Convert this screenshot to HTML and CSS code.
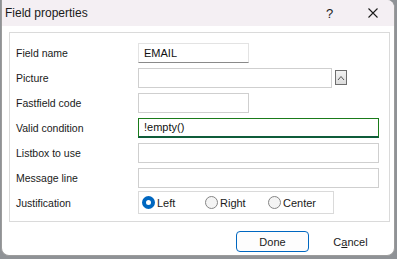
FILE: index.html
```html
<!DOCTYPE html>
<html lang="en">
<head>
    <meta charset="UTF-8">
    <title>Field properties</title>
    <link rel="stylesheet" href="styles.css">
</head>
<body>
    <div class="window">
        <div class="titlebar">
            <span class="title">Field properties</span>
            <span class="help">?</span>
            <span class="close">
                <svg width="10" height="10" viewBox="0 0 10 10">
                    <path d="M0.5 0.5 L9.5 9.5 M9.5 0.5 L0.5 9.5" stroke="#1b1b1b" stroke-width="1.1" fill="none"/>
                </svg>
            </span>
        </div>

        <div class="content">
            <div class="group">
                <div class="row">
                    <label for="fname">Field name</label>
                    <input type="text" id="fname" class="field short active" value="EMAIL">
                </div>

                <div class="row">
                    <label for="picture">Picture</label>
                    <input type="text" id="picture" class="field medium">
                    <button class="picker" type="button">
                        <svg width="8" height="6" viewBox="0 0 8 6">
                            <path d="M1 5 L4 1.5 L7 5" stroke="#555" stroke-width="1" fill="none"/>
                        </svg>
                    </button>
                </div>

                <div class="row">
                    <label for="fastfield">Fastfield code</label>
                    <input type="text" id="fastfield" class="field short">
                </div>

                <div class="row">
                    <label for="valid">Valid condition</label>
                    <input type="text" id="valid" class="field long focused" value="!empty()">
                </div>

                <div class="row">
                    <label for="listbox">Listbox to use</label>
                    <input type="text" id="listbox" class="field long">
                </div>

                <div class="row">
                    <label for="message">Message line</label>
                    <input type="text" id="message" class="field long">
                </div>

                <div class="row">
                    <label>Justification</label>
                    <div class="radios">
                        <span class="radio-item"><span class="radio checked"></span>Left</span>
                        <span class="radio-item"><span class="radio"></span>Right</span>
                        <span class="radio-item"><span class="radio"></span>Center</span>
                    </div>
                </div>
            </div>

            <div class="buttons">
                <button type="button" class="btn done">Done</button>
                <button type="button" class="btn cancel">C<u>a</u>ncel</button>
            </div>
        </div>
    </div>
</body>
</html>
```

FILE: styles.css
```css
body {
    margin: 0;
    height: 259px;
    background-color: #8f9296;
    font-family: 'Liberation Sans', Arial, sans-serif;
    color: #1a1a1a;
    overflow: hidden;
}
.window {
    margin-left: 1px;
    width: 392px;
    height: 255px;
    background-color: #fff;
    border: 1px solid #9c9c9c;
    border-top: none;
    border-radius: 0 8px 8px 8px;
    overflow: hidden;
}
.titlebar {
    height: 26px;
    display: flex;
    align-items: center;
    background-color: #f4eff3;
}
.title {
    padding-left: 3px;
    font-family: 'Segoe UI', 'Liberation Sans', Arial, sans-serif;
    font-size: 12px;
    flex: 1;
}
.help {
    font-family: 'Liberation Sans', Arial, sans-serif;
    font-size: 13px;
    width: 6px;
    margin-right: 36px;
}
.close {
    display: flex;
    width: 10px;
    height: 10px;
    margin-right: 16px;
}
.content {
    padding: 6px 3px 0 7px;
}
.group {
    width: 373px;
    border: 1px solid #dadada;
    padding: 7px 0 6px 6px;
}
.row {
    height: 25px;
    display: flex;
    align-items: center;
}
label {
    width: 122px;
    font-size: 10.5px;
}
.field {
    height: 20px;
    box-sizing: border-box;
    border: 1px solid #cfcfcf;
    background-color: #fff;
    padding: 0 5px;
    font-family: 'Liberation Sans', Arial, sans-serif;
    font-size: 11px;
    color: #111;
    outline: none;
    margin: 0;
}
.short {
    width: 111px;
}
.medium {
    width: 194px;
}
.long {
    width: 241px;
}
.active {
    border-color: #e3e3e3;
    border-bottom-color: #8a8a8a;
}
.focused {
    border-color: #1a7b1a;
    border-bottom: 2px solid #0f5c3a;
}
.picker {
    width: 12px;
    height: 15px;
    margin: 0 0 0 3px;
    padding: 0;
    border: 1px solid #6e6e6e;
    background: linear-gradient(#f2f2f2, #dcdcdc);
    display: flex;
    align-items: center;
    justify-content: center;
}
.radios {
    width: 196px;
    height: 23px;
    box-sizing: border-box;
    border: 1px solid #dadada;
    display: flex;
    align-items: center;
    padding-left: 3px;
    font-size: 11px;
}
.radio-item {
    width: 63px;
    display: flex;
    align-items: center;
}
.radio {
    width: 13px;
    height: 13px;
    box-sizing: border-box;
    border-radius: 50%;
    border: 1px solid #858585;
    background-color: #f4f4f4;
    margin-right: 2px;
}
.radio.checked {
    border: 4px solid #0067c0;
    background-color: #fff;
}
.buttons {
    display: flex;
    justify-content: flex-end;
    gap: 5px;
    margin-top: 9px;
    padding-right: 4px;
}
.btn {
    width: 73px;
    height: 21px;
    font-family: 'Liberation Sans', Arial, sans-serif;
    font-size: 11px;
    color: #1a1a1a;
    background-color: #fdfdfd;
    border: 1px solid transparent;
    border-radius: 4px;
    padding: 0;
}
.done {
    border-color: #0067c0;
}
.cancel {
    background-color: #fff;
}
```
